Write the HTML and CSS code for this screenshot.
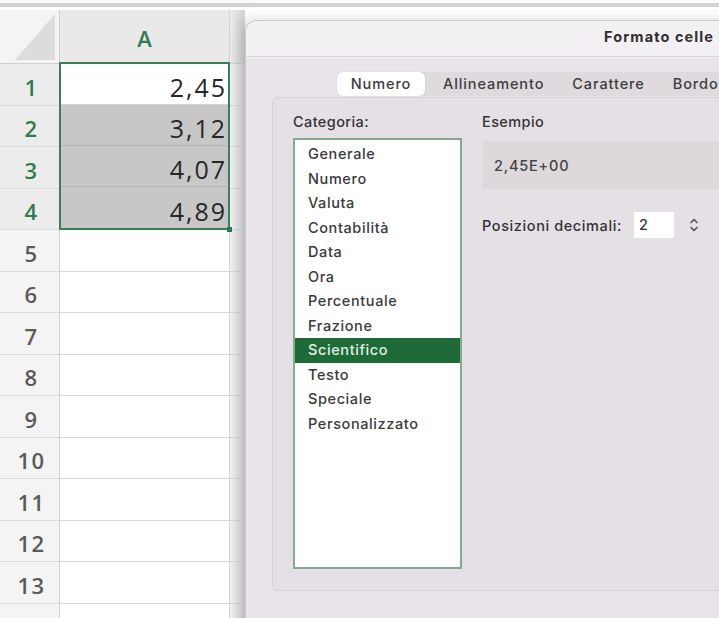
FILE: index.html
```html
<!DOCTYPE html>
<html lang="it">
<head>
<meta charset="utf-8">
<title>Formato celle</title>
<link rel="stylesheet" href="styles.css">
</head>
<body>
<div class="topline"></div>
<div class="main">
  <div class="sheet">
    <div class="rowhdr">
      <div class="corner">
        <svg width="60" height="54" viewBox="0 0 60 54"><polygon points="15,50 55,50 55,4" fill="#dcdcdc"/></svg>
      </div>
      <div class="rn sel-rn">1</div>
      <div class="rn sel-rn">2</div>
      <div class="rn sel-rn">3</div>
      <div class="rn sel-rn">4</div>
      <div class="rn">5</div>
      <div class="rn">6</div>
      <div class="rn">7</div>
      <div class="rn">8</div>
      <div class="rn">9</div>
      <div class="rn">10</div>
      <div class="rn">11</div>
      <div class="rn">12</div>
      <div class="rn">13</div>
      <div class="rn">14</div>
    </div>
    <div class="colA">
      <div class="colhead">A</div>
      <div class="selection">
        <div class="cell active">2,45</div>
        <div class="cell grey">3,12</div>
        <div class="cell grey">4,07</div>
        <div class="cell grey last">4,89</div>
        <span class="handle"></span>
      </div>
      <div class="cell"></div>
      <div class="cell"></div>
      <div class="cell"></div>
      <div class="cell"></div>
      <div class="cell"></div>
      <div class="cell"></div>
      <div class="cell"></div>
      <div class="cell"></div>
      <div class="cell"></div>
      <div class="cell"></div>
    </div>
    <div class="colB">
      <div class="colhead"></div>
      <div class="cell"></div><div class="cell"></div><div class="cell"></div><div class="cell"></div>
      <div class="cell"></div><div class="cell"></div><div class="cell"></div><div class="cell"></div>
      <div class="cell"></div><div class="cell"></div><div class="cell"></div><div class="cell"></div>
      <div class="cell"></div><div class="cell"></div>
    </div>
  </div>

  <div class="dialog">
    <div class="titlebar">Formato celle</div>
    <div class="dbody">
      <div class="tabs">
        <div class="tab on">Numero</div>
        <div class="tab">Allineamento</div>
        <div class="tab">Carattere</div>
        <div class="tab">Bordo</div>
      </div>
      <div class="panel">
        <div class="leftcol">
          <div class="label">Categoria:</div>
          <div class="listbox">
            <div class="item">Generale</div>
            <div class="item">Numero</div>
            <div class="item">Valuta</div>
            <div class="item">Contabilità</div>
            <div class="item">Data</div>
            <div class="item">Ora</div>
            <div class="item">Percentuale</div>
            <div class="item">Frazione</div>
            <div class="item selected">Scientifico</div>
            <div class="item">Testo</div>
            <div class="item">Speciale</div>
            <div class="item">Personalizzato</div>
          </div>
        </div>
        <div class="rightcol">
          <div class="label">Esempio</div>
          <div class="sample">2,45E+00</div>
          <div class="decrow">
            <span class="declabel">Posizioni decimali:</span>
            <span class="decinput">2</span>
            <svg class="stepper" width="12" height="18" viewBox="0 0 12 18"><path d="M3 6.5 L6 3.5 L9 6.5 M3 11.5 L6 14.5 L9 11.5" fill="none" stroke="#555" stroke-width="1.7" stroke-linecap="round" stroke-linejoin="round"/></svg>
          </div>
        </div>
      </div>
    </div>
  </div>
</div>
</body>
</html>
```
FILE: styles.css
```css
html, body {
  margin: 0;
  padding: 0;
}
body {
  width: 719px;
  height: 618px;
  overflow: hidden;
  background: #ffffff;
}
.topline {
  height: 3px;
  border-bottom: 4px solid #d2d2d2;
  margin-bottom: 3px;
  background: #fafafa;
}
.main {
  display: flex;
  align-items: flex-start;
}
/* ---------- spreadsheet ---------- */
.sheet {
  display: flex;
  flex: none;
  width: 245px;
  font-family: "Open Sans", "Noto Sans", sans-serif;
}
.rowhdr {
  width: 60px;
  flex: none;
  background: #f4f4f4;
  border-right: 1px solid #cfcfcf;
  box-sizing: border-box;
}
.corner {
  height: 54px;
  box-sizing: border-box;
  border-bottom: 1px solid #cfcfcf;
}
.corner svg { display: block; }
.rn {
  height: 41.5px;
  box-sizing: border-box;
  border-bottom: 1px solid #dcdcdc;
  display: flex;
  align-items: center;
  justify-content: center;
  padding: 5px 0 0 4px;
  font-size: 22px;
  font-weight: 600;
  letter-spacing: 1.5px;
  color: #5a5a5a;
}
.rn.sel-rn {
  color: #2e7d4f;
  background: #ececec;
}
.colA {
  width: 170px;
  flex: none;
}
.colB {
  flex: 1;
}
.colhead {
  height: 54px;
  box-sizing: border-box;
  background: #f2f2f2;
  border-bottom: 1px solid #cfcfcf;
  border-right: 1px solid #d4d4d4;
  display: flex;
  align-items: center;
  justify-content: center;
  padding-top: 4px;
  font-size: 22px;
  font-weight: 600;
  color: #2e7d4f;
}
.colA .colhead {
  background: #e9e9e9;
  border-bottom: 2px solid #2f7a50;
}
.cell {
  height: 41.5px;
  box-sizing: border-box;
  border-bottom: 1px solid #d6d6d6;
  border-right: 1px solid #d6d6d6;
  display: flex;
  align-items: center;
  justify-content: flex-end;
  padding: 6px 1px 0 0;
  font-size: 25px;
  font-weight: 500;
  letter-spacing: 2px;
  color: #262626;
}
.colB .cell {
  background: linear-gradient(to right, #f2f2f2, #d7d7d7);
}
.colB .colhead {
  background: linear-gradient(to right, #ececec, #d2d2d2);
}
.selection {
  position: relative;
  margin-left: -1px;
  margin-top: -2px;
  height: 168px;
  box-sizing: border-box;
  border: 2px solid #3a7f58;
}
.selection .cell {
  height: 41px;
  border-right: none;
  padding-right: 1px;
}
.selection .cell.last { border-bottom: none; }
.cell.active { background: #ffffff; }
.cell.grey { background: #c7c7c7; border-bottom-color: #b5b5b5; }
.handle {
  position: absolute;
  right: -4px;
  bottom: -4px;
  width: 5px;
  height: 5px;
  background: #2f7a50;
}
/* ---------- dialog ---------- */
.dialog {
  flex: none;
  width: 540px;
  height: 620px;
  margin-top: 10px;
  box-sizing: border-box;
  background: #e9e4e9;
  border: 1px solid #cdc8cd;
  border-right: none;
  border-top-left-radius: 12px;
  box-shadow: -4px 0 14px rgba(0, 0, 0, 0.16);
  font-family: "Inter", "Liberation Sans", sans-serif;
  color: #3a3a3a;
  overflow: hidden;
}
.titlebar {
  height: 36px;
  box-sizing: border-box;
  display: flex;
  align-items: center;
  padding: 0 0 5px 358px;
  background: #f3f0f4;
  border-bottom: 1px solid #dcd8dc;
  box-shadow: 0 2px 0 #efebef;
  font-size: 14.5px;
  font-weight: 700;
  letter-spacing: 1.1px;
  color: #2f2f2f;
  white-space: nowrap;
}
.dbody {
  padding: 15px 0 0 26px;
}
.tabs {
  display: flex;
  margin-left: 65px;
  height: 24px;
  align-items: center;
  background: #dedade;
  border-radius: 6px;
  white-space: nowrap;
  font-size: 14.5px;
  font-weight: 500;
  letter-spacing: 0.9px;
  color: #3d3d3d;
}
.tab {
  padding: 0 14px;
  height: 24px;
  line-height: 24px;
}
.tab.on {
  width: 88px;
  box-sizing: border-box;
  text-align: center;
  background: #ffffff;
  border-radius: 6px;
  box-shadow: 0 0 1px rgba(0, 0, 0, 0.2);
  padding: 0;
  margin-right: 4px;
}
.panel {
  display: flex;
  height: 494px;
  box-sizing: border-box;
  margin-top: 1px;
  padding: 15px 0 0 20px;
  background: #e5e0e5;
  border: 1px solid #d6d1d6;
  border-right: none;
  border-radius: 6px 0 0 6px;
}
.leftcol {
  width: 169px;
  flex: none;
}
.label {
  height: 18px;
  line-height: 18px;
  font-size: 14.5px;
  font-weight: 500;
  letter-spacing: 0.4px;
  color: #333;
}
.listbox {
  margin-top: 7px;
  height: 431px;
  box-sizing: border-box;
  background: #ffffff;
  border: 2px solid #82ab90;
  padding-top: 2px;
}
.item {
  height: 24.5px;
  line-height: 24.5px;
  padding-left: 13px;
  font-size: 14.5px;
  font-weight: 500;
  letter-spacing: 0.6px;
  color: #3a3a3a;
}
.item.selected {
  background: #1f6b37;
  color: #e2eee4;
}
.rightcol {
  flex: 1;
  margin-left: 20px;
}
.sample {
  margin-top: 10px;
  height: 48px;
  box-sizing: border-box;
  display: flex;
  align-items: center;
  padding-left: 12px;
  background: #dcd8dc;
  border-radius: 4px 0 0 4px;
  font-size: 14.5px;
  font-weight: 500;
  letter-spacing: 0.8px;
  color: #444;
}
.decrow {
  margin-top: 22px;
  display: flex;
  align-items: center;
  height: 28px;
  font-size: 14.5px;
  font-weight: 500;
  letter-spacing: 0.6px;
  color: #333;
}
.declabel {
  width: 152px;
  flex: none;
  white-space: nowrap;
}
.decinput {
  width: 40px;
  height: 26px;
  box-sizing: border-box;
  background: #ffffff;
  padding-left: 5px;
  line-height: 26px;
}
.stepper {
  margin-left: 14px;
}
```
